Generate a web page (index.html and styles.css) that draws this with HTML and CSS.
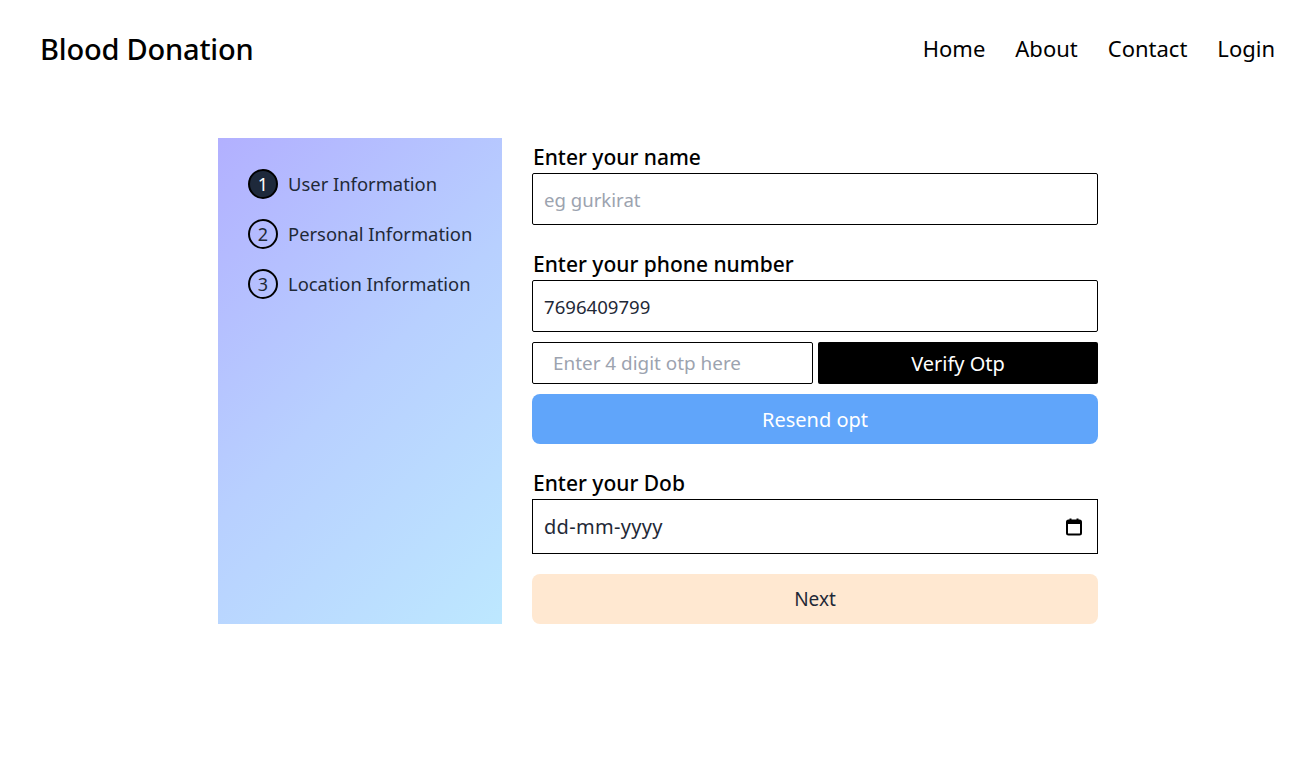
FILE: index.html
```html
<!DOCTYPE html>
<html lang="en">
<head>
<meta charset="utf-8">
<title>Blood Donation</title>
<link rel="stylesheet" href="styles.css">
</head>
<body>
<header class="header">
  <div class="brand">Blood Donation</div>
  <nav class="nav">
    <a href="#">Home</a>
    <a href="#">About</a>
    <a href="#">Contact</a>
    <a href="#">Login</a>
  </nav>
</header>
<main class="main">
  <aside class="steps">
    <div class="step"><span class="num active">1</span><span>User Information</span></div>
    <div class="step"><span class="num">2</span><span>Personal Information</span></div>
    <div class="step"><span class="num">3</span><span>Location Information</span></div>
  </aside>
  <form class="form">
    <label class="label">Enter your name</label>
    <input class="input" type="text" placeholder="eg gurkirat">
    <label class="label label-gap">Enter your phone number</label>
    <input class="input" type="text" value="7696409799">
    <div class="otp-row">
      <input class="otp-input" type="text" placeholder="Enter 4 digit otp here">
      <button class="verify" type="button">Verify Otp</button>
    </div>
    <button class="resend" type="button">Resend opt</button>
    <label class="label label-gap">Enter your Dob</label>
    <div class="date">
      <span>dd-mm-yyyy</span>
      <svg class="cal" width="16" height="19" viewBox="0 0 16 19"><rect x="1" y="3.5" width="14" height="14" rx="1.5" fill="none" stroke="#000" stroke-width="2"/><rect x="1" y="3.5" width="14" height="3.5" fill="#000"/><path d="M4.5 1.5v3M11.5 1.5v3" stroke="#000" stroke-width="2"/></svg>
    </div>
    <button class="next" type="button">Next</button>
  </form>
</main>
</body>
</html>
```

FILE: styles.css
```css
* { box-sizing: border-box; }
body {
  margin: 0;
  font-family: "Noto Sans", "Open Sans", sans-serif;
  color: #000;
  background: #fff;
}
.header {
  display: flex;
  justify-content: space-between;
  align-items: center;
  height: 96px;
  padding: 0 37px 0 40px;
}
.brand {
  font-size: 29px;
  font-weight: 500;
  letter-spacing: -0.2px;
}
.nav {
  display: flex;
  gap: 30px;
}
.nav a {
  color: #000;
  text-decoration: none;
  font-size: 22px;
}
.main {
  display: flex;
  justify-content: center;
  gap: 30px;
  padding-top: 42px;
  padding-left: 4px;
}
.steps {
  width: 284px;
  height: 486px;
  background: linear-gradient(135deg, #b2b0ff 0%, #b8d0ff 50%, #bde8ff 100%);
  padding: 31px 0 0 30px;
  display: flex;
  flex-direction: column;
  gap: 20px;
}
.step {
  display: flex;
  align-items: center;
  gap: 10px;
  font-size: 18.4px;
  line-height: 28px;
  color: #1f2937;
  height: 30px;
}
.step span:last-child { margin-top: -1px; }
.num {
  width: 30px;
  height: 30px;
  border: 2px solid #000;
  border-radius: 50%;
  display: flex;
  align-items: center;
  justify-content: center;
  font-size: 18px;
  color: #1f2937;
}
.num.active {
  background: #1e293b;
  color: #fff;
  border-color: #000;
}
.form {
  width: 566px;
  display: flex;
  flex-direction: column;
  margin: 0;
  padding-top: 5px;
}
.label {
  font-size: 21px;
  font-weight: 500;
  line-height: 28px;
  margin-left: 1px;
  margin-bottom: 2px;
}
.label-gap { margin-top: 25px; }
.input, .otp-input {
  font-family: inherit;
  height: 52px;
  border: 1px solid #000;
  border-radius: 2px;
  padding: 0 11px;
  font-size: 18.6px;
  color: #1f2937;
  outline: none;
}
.input::placeholder, .otp-input::placeholder { color: #9ca3af; }
.otp-row {
  display: flex;
  gap: 5px;
  margin-top: 10px;
}
.otp-input {
  width: 281px;
  height: 42px;
  padding: 0 20px;
  font-size: 18.9px;
}
.verify {
  flex: 1;
  height: 42px;
  background: #000;
  color: #fff;
  border: none;
  border-radius: 2px;
  font-family: inherit;
  font-size: 20px;
  font-weight: 400;
}
.resend {
  margin-top: 10px;
  height: 50px;
  background: #60a5fa;
  color: #fff;
  border: none;
  border-radius: 8px;
  font-family: inherit;
  font-size: 20px;
  font-weight: 400;
}
.date {
  height: 55px;
  border: 1px solid #000;
  display: flex;
  align-items: center;
  justify-content: space-between;
  padding: 0 15px 0 11px;
  font-size: 20px;
  letter-spacing: 0.3px;
  color: #1f2937;
}
.cal { display: block; }
.next {
  margin-top: 20px;
  height: 50px;
  background: #ffe8d1;
  color: #1f2937;
  border: none;
  border-radius: 8px;
  font-family: inherit;
  font-size: 19px;
}
```
